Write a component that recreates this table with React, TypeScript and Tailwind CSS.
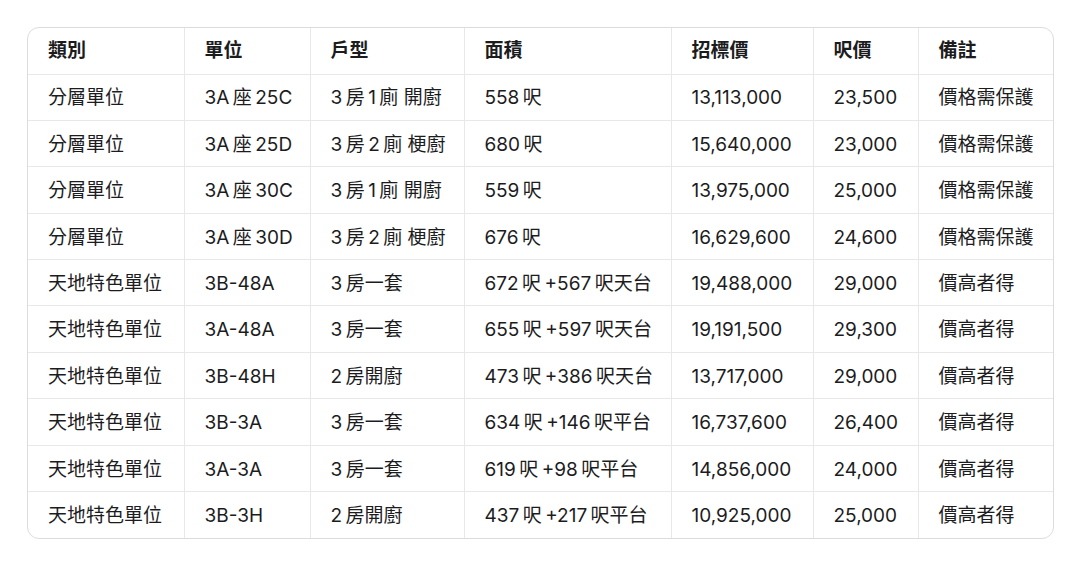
const headers = ["類別", "單位", "戶型", "面積", "招標價", "呎價", "備註"];

const widths = ["w-[156px]", "w-[126px]", "w-[154px]", "w-[207px]", "w-[142px]", "w-[105px]", "w-[136px]"];

// thin space between latin and CJK, like the autospacing in the original
const t = "\u2009";

const rows: string[][] = [
  ["分層單位", `3A${t}座${t}25C`, `3${t}房${t}1${t}廁 開廚`, `558${t}呎`, "13,113,000", "23,500", "價格需保護"],
  ["分層單位", `3A${t}座${t}25D`, `3${t}房${t}2${t}廁 梗廚`, `680${t}呎`, "15,640,000", "23,000", "價格需保護"],
  ["分層單位", `3A${t}座${t}30C`, `3${t}房${t}1${t}廁 開廚`, `559${t}呎`, "13,975,000", "25,000", "價格需保護"],
  ["分層單位", `3A${t}座${t}30D`, `3${t}房${t}2${t}廁 梗廚`, `676${t}呎`, "16,629,600", "24,600", "價格需保護"],
  ["天地特色單位", "3B-48A", `3${t}房一套`, `672${t}呎${t}+567${t}呎天台`, "19,488,000", "29,000", "價高者得"],
  ["天地特色單位", "3A-48A", `3${t}房一套`, `655${t}呎${t}+597${t}呎天台`, "19,191,500", "29,300", "價高者得"],
  ["天地特色單位", "3B-48H", `2${t}房開廚`, `473${t}呎${t}+386${t}呎天台`, "13,717,000", "29,000", "價高者得"],
  ["天地特色單位", "3B-3A", `3${t}房一套`, `634${t}呎${t}+146${t}呎平台`, "16,737,600", "26,400", "價高者得"],
  ["天地特色單位", "3A-3A", `3${t}房一套`, `619${t}呎${t}+98${t}呎平台`, "14,856,000", "24,000", "價高者得"],
  ["天地特色單位", "3B-3H", `2${t}房開廚`, `437${t}呎${t}+217${t}呎平台`, "10,925,000", "25,000", "價高者得"],
];

export default function App() {
  return (
    <div
      className="w-[1080px] h-[563px] bg-white pt-[27px] pl-[27px] text-[#1c1c1e]"
      style={{ fontFamily: 'Inter, "Noto Sans CJK TC", sans-serif' }}
    >
      <div className="w-[1027px] overflow-hidden rounded-[12px] border border-[#dcdcdc]">
        <table className="w-full border-collapse table-fixed text-[19px]">
          <thead>
            <tr className="h-[46px]">
              {headers.map((h, i) => (
                <th
                  key={h}
                  className={`${widths[i]} px-5 text-left font-semibold ${i > 0 ? "border-l border-[#e8e8e8]" : ""}`}
                >
                  {h}
                </th>
              ))}
            </tr>
          </thead>
          <tbody>
            {rows.map((r, ri) => (
              <tr key={ri} className="h-[46.4px] border-t border-[#e8e8e8]">
                {r.map((c, ci) => (
                  <td
                    key={ci}
                    className={`px-5 pt-[3px] whitespace-nowrap ${ci > 0 ? "border-l border-[#e8e8e8]" : ""}`}
                  >
                    {c}
                  </td>
                ))}
              </tr>
            ))}
          </tbody>
        </table>
      </div>
    </div>
  );
}
